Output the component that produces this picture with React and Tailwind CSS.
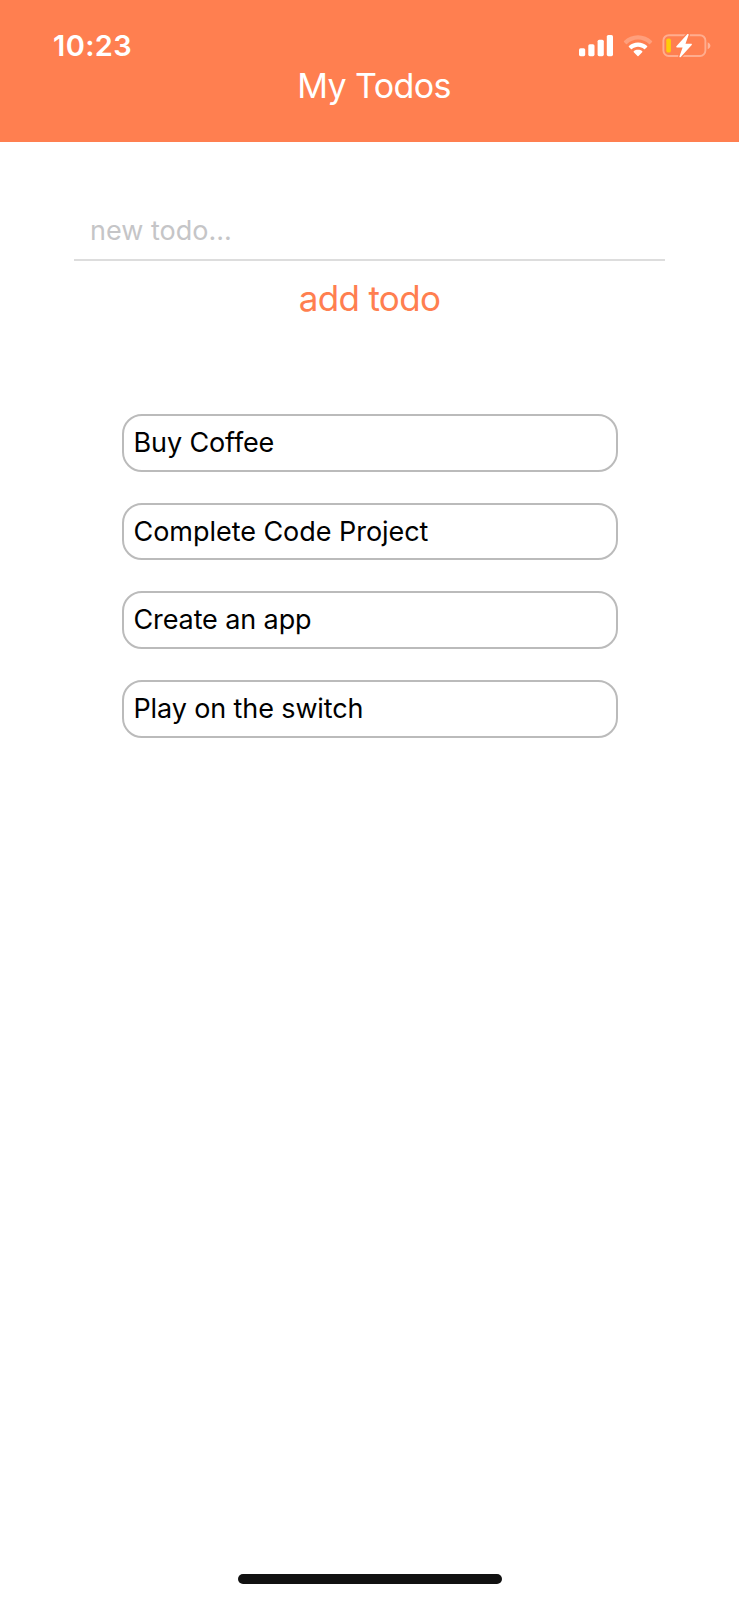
const todos = [
  { text: "Buy Coffee", spacing: "tracking-[-0.12px]" },
  { text: "Complete Code Project", spacing: "tracking-[-0.04px]" },
  { text: "Create an app", spacing: "tracking-[-0.11px]" },
  { text: "Play on the switch", spacing: "tracking-[-0.12px]" },
];

function Signal() {
  return (
    <svg width="34" height="22" viewBox="0 0 34 22" fill="#fff" aria-hidden="true">
      <rect x="0" y="13.2" width="6.2" height="8" rx="1.6" />
      <rect x="9.3" y="9.2" width="6.2" height="12" rx="1.6" />
      <rect x="18.6" y="4.7" width="6.2" height="16.5" rx="1.6" />
      <rect x="27.8" y="0" width="6.2" height="21.2" rx="1.6" />
    </svg>
  );
}

function Wifi() {
  return (
    <svg width="30" height="22" viewBox="0 0 30 22" fill="#fff" aria-hidden="true">
      <path
        d="M15 0.3C20.4 0.3 25.3 2.4 29 5.9C29.3 6.2 29.3 6.6 29 6.9L27 8.9C26.7 9.2 26.3 9.2 26 8.9C23.1 6.2 19.2 4.6 15 4.6C10.8 4.6 6.9 6.2 4 8.9C3.7 9.2 3.3 9.2 3 8.9L1 6.9C0.7 6.6 0.7 6.2 1 5.9C4.7 2.4 9.6 0.3 15 0.3Z"
        opacity="0.25"
      />
      <path d="M15 7.5C18.5 7.5 21.7 8.8 24.1 11C24.4 11.3 24.4 11.7 24.1 12L22 14.1C21.7 14.4 21.3 14.4 21 14.1C19.4 12.7 17.3 11.8 15 11.8C12.7 11.8 10.6 12.7 9 14.1C8.7 14.4 8.3 14.4 8 14.1L5.9 12C5.6 11.7 5.6 11.3 5.9 11C8.3 8.8 11.5 7.5 15 7.5Z" />
      <path d="M15 14.7C16.6 14.7 18 15.2 19.1 16.1C19.5 16.4 19.5 16.8 19.2 17.2L15.5 20.9C15.2 21.2 14.8 21.2 14.5 20.9L10.8 17.2C10.5 16.8 10.5 16.4 10.9 16.1C12 15.2 13.4 14.7 15 14.7Z" />
    </svg>
  );
}

function Battery() {
  return (
    <svg width="49" height="26" viewBox="0 0 49 26" fill="none" aria-hidden="true">
      <rect x="1.4" y="2.2" width="42" height="20.8" rx="5.4" stroke="#fff" strokeOpacity="0.36" strokeWidth="1.9" />
      <path d="M45.7 9.2C47.4 9.9 48.4 11.2 48.4 12.7C48.4 14.2 47.4 15.5 45.7 16.2Z" fill="#fff" fillOpacity="0.42" />
      <rect x="4.3" y="5.4" width="4.6" height="14.2" rx="1.9" fill="#ffcc0a" />
      <path
        d="M25.2 1.3L14.4 13.3C14 13.8 14.3 14.4 14.9 14.4H20.6L17.5 23.2C17.2 24.3 18.1 24.6 18.8 23.9L29.7 11.9C30.1 11.4 29.8 10.8 29.2 10.8H23.5L26.6 2C26.9 1 25.9 0.6 25.2 1.3Z"
        fill="#fff"
        stroke="#ff7f50"
        strokeWidth="2.6"
        paintOrder="stroke"
      />
    </svg>
  );
}

export default function App() {
  return (
    <div className="flex h-[1600px] w-full flex-col bg-white font-[Inter,sans-serif] text-black">
      <header className="h-[142px] shrink-0 bg-[#ff7f50] text-white">
        <div className="flex h-[68px] justify-between pt-[33px] pr-[28px] pl-[53px]">
          <div className="h-[24px] text-[29px] leading-[25px] font-semibold tracking-[0.4px]">10:23</div>
          <div className="flex items-start">
            <div className="pt-[2px]"><Signal /></div>
            <div className="ml-[10px] pt-[2px]"><Wifi /></div>
            <div className="ml-[9px]"><Battery /></div>
          </div>
        </div>
        <h1 className="pl-[9px] text-center text-[34px] leading-[36px] font-normal tracking-[-0.6px]">My Todos</h1>
      </header>

      <main className="flex-1 px-[74px] pt-[67px]">
        <input
          type="text"
          placeholder="new todo..."
          className="block h-[52px] w-full border-b-2 border-[#dddddd] bg-transparent px-[16px] pb-[7px] text-[27px] outline-none placeholder:text-[#c5c5c7]"
        />
        <button className="mt-[16px] block h-[42px] w-full text-center text-[35px] leading-[42px] tracking-[-0.65px] text-[#ff7f50]">add todo</button>

        <ul className="mt-[95px] flex flex-col gap-[31px] pr-[47px] pl-[48px]">
          {todos.map((todo) => (
            <li key={todo.text} className="flex h-[57.7px] items-center rounded-[20px] border-2 border-[#bbbbbb] pl-[9.5px]">
              <span className={"text-[27px] leading-[34px] " + todo.spacing}>{todo.text}</span>
            </li>
          ))}
        </ul>
      </main>

      <footer className="flex shrink-0 justify-center pb-[16px]">
        <div className="h-[10px] w-[264px] rounded-full bg-[#111111]" />
      </footer>
    </div>
  );
}
